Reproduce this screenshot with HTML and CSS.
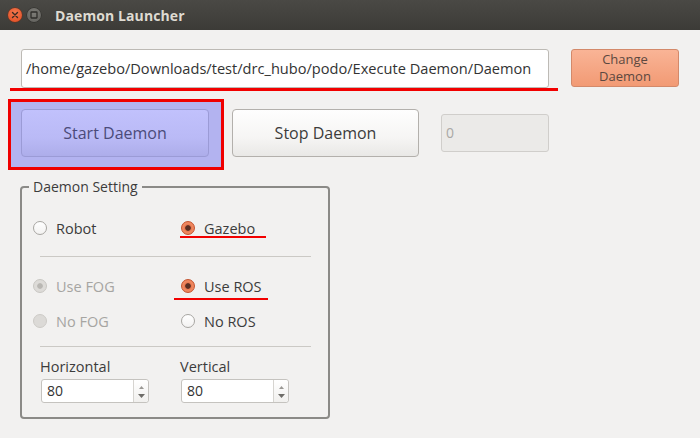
FILE: index.html
```html
<!DOCTYPE html>
<html>
<head>
<meta charset="utf-8">
<link rel="stylesheet" href="styles.css">
</head>
<body>
<div class="window">
  <div class="titlebar">
    <span class="tb-btn tb-close"><svg width="14" height="14" viewBox="0 0 14 14"><path d="M4.5 4.5 L9.5 9.5 M9.5 4.5 L4.5 9.5" stroke="#3a2a22" stroke-width="1.4" stroke-linecap="round"/></svg></span>
    <span class="tb-btn tb-max"><svg width="14" height="14" viewBox="0 0 14 14"><rect x="4" y="4" width="6" height="6" rx="0.5" fill="none" stroke="#2e2d2a" stroke-width="1.3"/></svg></span>
    <span class="tb-title">Daemon Launcher</span>
  </div>
  <div class="content">
    <div class="row1">
      <div class="path-input">/home/gazebo/Downloads/test/drc_hubo/podo/Execute Daemon/Daemon</div>
      <button class="btn btn-change"><span class="bl">Change</span><span class="bl">Daemon</span></button>
      <span class="mark mark-path"></span>
    </div>
    <div class="row2">
      <div class="hl-box"><button class="btn btn-start">Start Daemon</button></div>
      <button class="btn btn-stop">Stop Daemon</button>
      <div class="spin-disabled">0</div>
    </div>
    <fieldset class="group">
      <legend>Daemon Setting</legend>
      <div class="radio-row first">
        <label class="radio"><span class="dot"></span>Robot</label>
        <label class="radio"><span class="dot on"></span>Gazebo</label>
      </div>
      <div class="sep"></div>
      <div class="radio-row second">
        <label class="radio disabled"><span class="dot dis-on"></span>Use FOG</label>
        <label class="radio"><span class="dot on"></span>Use ROS</label>
      </div>
      <div class="radio-row">
        <label class="radio disabled"><span class="dot dis"></span>No FOG</label>
        <label class="radio"><span class="dot"></span>No ROS</label>
      </div>
      <div class="sep sep2"></div>
      <div class="spins">
        <div class="spin-col">
          <div class="spin-label">Horizontal</div>
          <div class="spin"><span class="spin-val">80</span><span class="spin-arrows"><svg width="5" height="4" viewBox="0 0 5 4"><path d="M0 4 L2.5 1 L5 4Z" fill="#9a9894"/></svg><svg width="7" height="4" viewBox="0 0 7 4"><path d="M0 0 L3.5 4 L7 0Z" fill="#6e6c68"/></svg></span></div>
        </div>
        <div class="spin-col">
          <div class="spin-label">Vertical</div>
          <div class="spin"><span class="spin-val">80</span><span class="spin-arrows"><svg width="5" height="4" viewBox="0 0 5 4"><path d="M0 4 L2.5 1 L5 4Z" fill="#9a9894"/></svg><svg width="7" height="4" viewBox="0 0 7 4"><path d="M0 0 L3.5 4 L7 0Z" fill="#6e6c68"/></svg></span></div>
        </div>
      </div>
      <span class="mark mark-gazebo"></span>
      <span class="mark mark-ros"></span>
    </fieldset>
  </div>
</div>
</body>
</html>
```
FILE: styles.css
```css
* { box-sizing: border-box; }
html, body { margin: 0; padding: 0; }
body {
  width: 700px;
  height: 438px;
  overflow: hidden;
  background: #f2f1f0;
  font-family: "Open Sans", "DejaVu Sans", sans-serif;
  color: #3c3c3c;
}
.window { width: 700px; height: 438px; position: relative; }
.titlebar {
  height: 30px;
  background: linear-gradient(#4a4945, #3c3b37);
  display: flex;
  align-items: center;
  padding-left: 8px;
}
.tb-btn {
  width: 14px; height: 14px; border-radius: 50%;
  display: inline-flex;
}
.tb-close {
  background: radial-gradient(circle at 50% 35%, #f47a50, #e0491e);
  box-shadow: 0 0 0 0.5px #7a2a12;
}
.tb-max {
  margin-left: 5px;
  background: radial-gradient(circle at 50% 35%, #7d7c77, #5e5d59);
  box-shadow: 0 0 0 0.5px #2a2926;
}
.tb-title {
  margin-left: 14px;
  font-weight: bold;
  font-size: 14px;
  color: #dfdbd2;
  letter-spacing: 0.1px;
}
.content { padding-top: 19px; }
.row1 {
  display: flex;
  align-items: flex-start;
  padding-left: 21px;
  position: relative;
}
.path-input {
  width: 528px; height: 39px;
  background: #fff;
  border: 1px solid #bdbab5;
  border-radius: 3px;
  font-size: 14.6px;
  line-height: 37px;
  padding-left: 4px;
  white-space: nowrap;
  overflow: hidden;
  color: #333;
}
.btn {
  font-family: inherit;
  margin: 0;
  cursor: default;
}
.btn-change {
  margin-left: 22px;
  width: 108px; height: 38px;
  border: 1px solid #d3896a;
  border-radius: 3px;
  background: linear-gradient(#f9b496, #f29a74);
  font-size: 13px;
  color: #5c4840;
  padding: 0;
  display: flex;
  flex-direction: column;
  align-items: center;
  justify-content: center;
}
.bl { display: block; line-height: 17px; height: 17px; }
.mark { position: absolute; height: 2px; background: #f20000; }
.mark-path { left: 10px; top: 39px; width: 548px; height: 2.5px; }
.row2 {
  display: flex;
  align-items: flex-start;
  margin-top: 11px;
  padding-left: 8px;
}
.hl-box {
  width: 216px; height: 71px;
  border: 3px solid #f00000;
  background: #b3b3f0;
  padding: 7px 0 0 10px;
}
.btn-start {
  width: 188px; height: 48px;
  border: 1px solid #9b9bd6;
  border-radius: 4px;
  background: linear-gradient(#c1c1fc, #babaf6 60%, #adadea);
  font-size: 16px;
  color: #4b4b7a;
}
.btn-stop {
  margin-left: 8px;
  margin-top: 10px;
  width: 187px; height: 48px;
  border: 1px solid #b3b0ac;
  border-radius: 4px;
  background: linear-gradient(#fefefe, #f6f5f4 60%, #e9e8e6);
  font-size: 16px;
  color: #3c3c3c;
}
.spin-disabled {
  margin-left: 22px;
  margin-top: 15px;
  width: 108px; height: 38px;
  border: 1px solid #d0cecb;
  border-radius: 3px;
  background: #ebeae8;
  color: #a9a8a5;
  font-size: 14px;
  line-height: 36px;
  padding-left: 4px;
}
.group {
  position: relative;
  margin: 9px 0 0 20px;
  width: 310px;
  height: 240px;
  border: 2px solid #8b8a87;
  border-radius: 4px;
  padding: 0 0 0 11px;
}
.group legend {
  font-size: 14px;
  line-height: 16px;
  padding: 0 4px;
  margin-left: -4px;
  color: #3c3c3c;
}
.radio-row {
  display: grid;
  grid-template-columns: 148px auto;
  height: 28px;
  align-items: center;
  font-size: 14.5px;
}
.radio-row.first { margin-top: 19px; }
.radio-row.second { margin-top: 15px; }
.radio-row + .radio-row { margin-top: 7px; }
.radio { display: flex; align-items: center; color: #3c3c3c; }
.radio.disabled { color: #a6a5a2; }
.dot {
  width: 14px; height: 14px;
  border-radius: 50%;
  margin-right: 9px;
  border: 1px solid #a8a6a2;
  background: linear-gradient(#ffffff, #f3f2f1);
  position: relative;
  flex: none;
}
.dot.on {
  border: 1px solid #c4532e;
  background: radial-gradient(circle at 50% 50%, #5a2e22 0 2.4px, #e8774f 3.2px, #f08a62 5px, #e66c42);
}
.dot.dis-on {
  border: 1px solid #c8c6c2;
  background: radial-gradient(circle at 50% 50%, #b9b7b3 0 2.4px, #dddbd8 3.2px);
}
.dot.dis {
  border: 1px solid #cdcbc7;
  background: #dcdad7;
}
.sep {
  width: 271px;
  height: 1px;
  background: #cbc9c5;
  margin: 14px 0 0 7px;
}
.sep2 { margin-top: 11px; }
.spins {
  display: flex;
  margin-top: 11px;
  padding-left: 7px;
}
.spin-col { width: 140px; }
.spin-label { font-size: 14.5px; line-height: 18px; color: #3c3c3c; }
.spin {
  margin-top: 3px;
  margin-left: 1px;
  width: 108px; height: 24px;
  border: 1px solid #c5c3bf;
  border-radius: 3px;
  background: #fff;
  display: flex;
}
.spin-val { flex: 1; font-size: 14px; line-height: 22px; padding-left: 5px; color: #333; }
.spin-arrows {
  width: 15px;
  border-left: 1px solid #d6d4d0;
  background: linear-gradient(#ffffff, #f1f0ee);
  display: flex; flex-direction: column; align-items: center; justify-content: center;
  gap: 5px;
  border-radius: 0 3px 3px 0;
}
.mark-gazebo { left: 158px; top: 41px; width: 86px; }
.mark-ros { left: 152px; top: 103px; width: 94px; }
```
